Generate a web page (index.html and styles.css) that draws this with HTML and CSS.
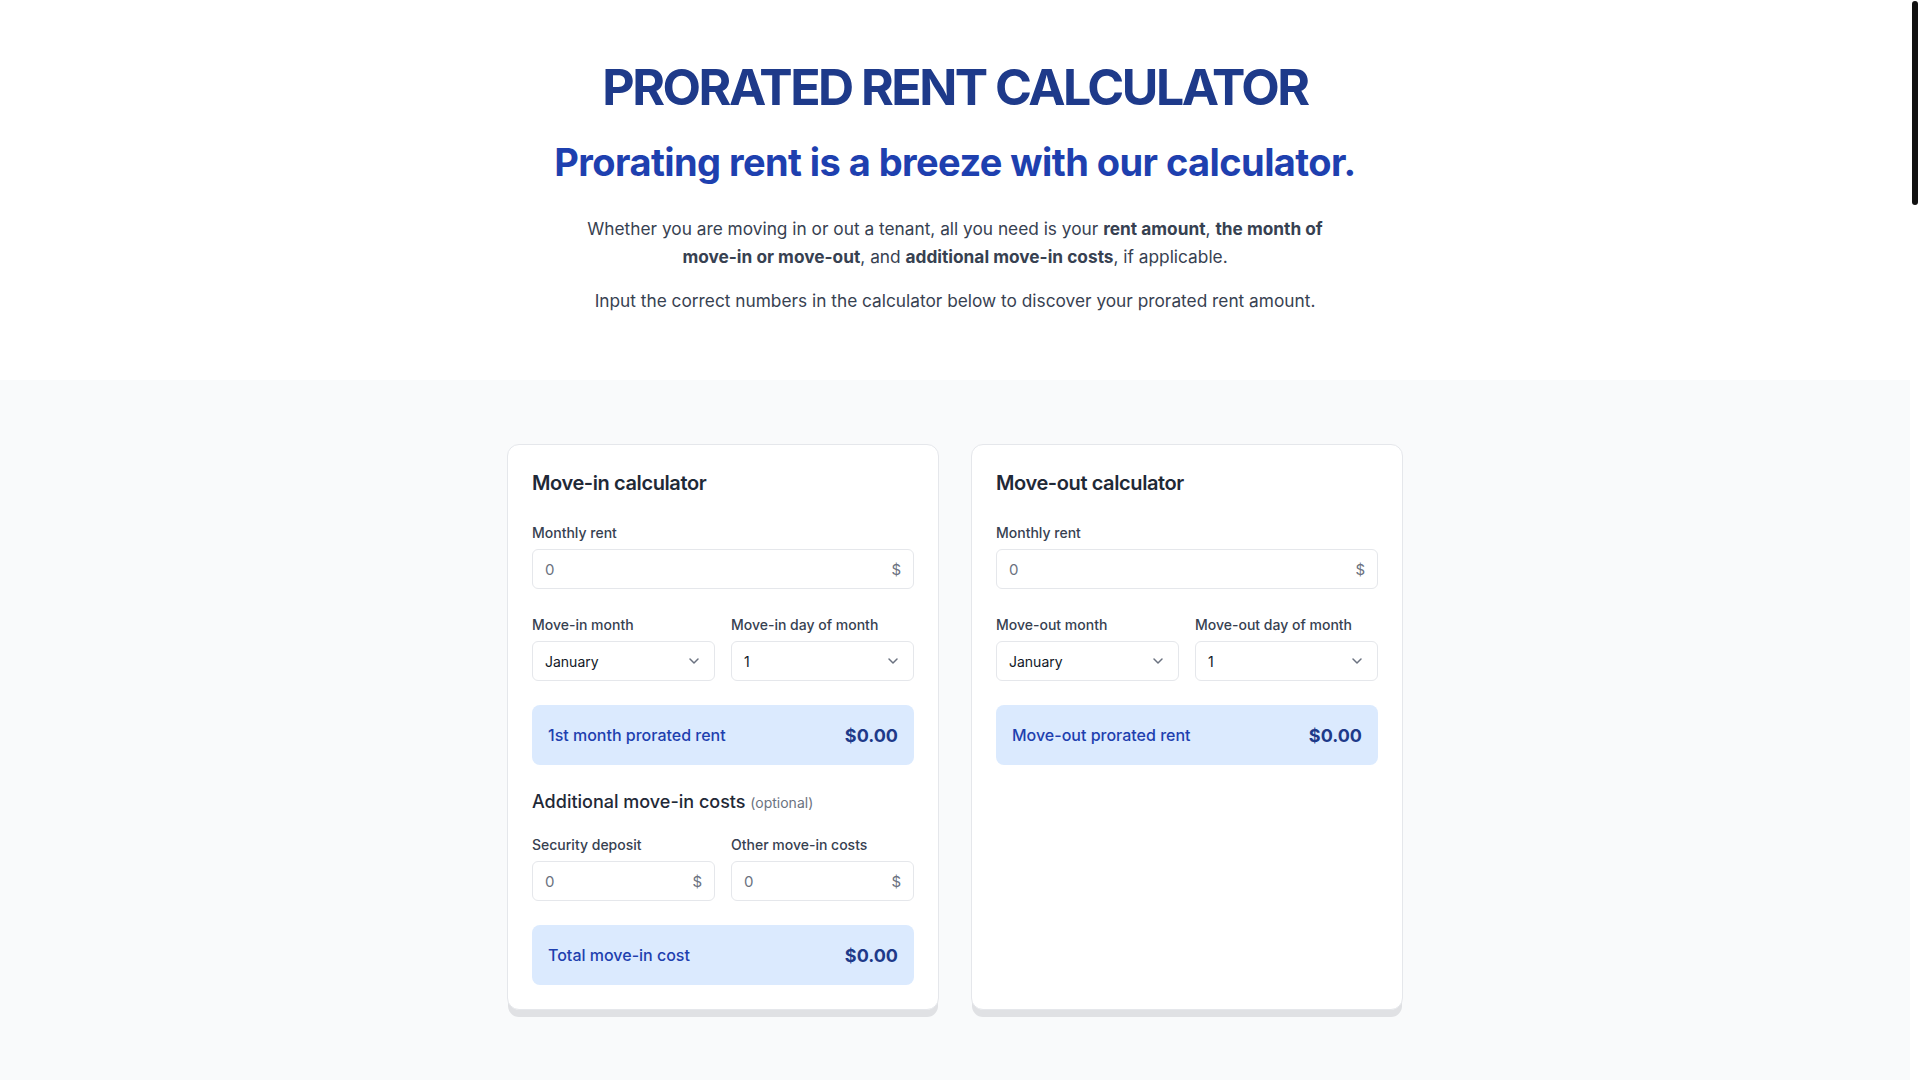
FILE: index.html
```html
<!DOCTYPE html>
<html lang="en">
<head>
<meta charset="utf-8">
<title>Prorated Rent Calculator</title>
<link rel="stylesheet" href="styles.css">
</head>
<body>
<div class="scroll-thumb" aria-hidden="true"></div>
<header class="hero">
  <h1 class="title">PRORATED RENT CALCULATOR</h1>
  <h2 class="subtitle">Prorating rent is a breeze with our calculator.</h2>
  <p class="lead">Whether you are moving in or out a tenant, all you need is your <strong>rent amount</strong>, <strong>the month of move-in or move-out</strong>, and <strong>additional move-in costs</strong>, if applicable.</p>
  <p class="lead">Input the correct numbers in the calculator below to discover your prorated rent amount.</p>
</header>

<section class="calc-section">
  <div class="calc-grid">
    <div class="card">
      <h3 class="card-title">Move-in calculator</h3>
      <div class="field">
        <label class="label">Monthly rent</label>
        <div class="input-box"><input class="input" type="text" placeholder="0"><span class="unit">$</span></div>
      </div>
      <div class="row">
        <div class="field">
          <label class="label">Move-in month</label>
          <div class="select-box">
            <select class="select"><option>January</option></select>
            <svg class="chev" viewBox="0 0 20 20" width="20" height="20"><path d="M6 8l4 4 4-4" fill="none" stroke="#6b7280" stroke-width="1.5" stroke-linecap="round" stroke-linejoin="round"/></svg>
          </div>
        </div>
        <div class="field">
          <label class="label">Move-in day of month</label>
          <div class="select-box">
            <select class="select"><option>1</option></select>
            <svg class="chev" viewBox="0 0 20 20" width="20" height="20"><path d="M6 8l4 4 4-4" fill="none" stroke="#6b7280" stroke-width="1.5" stroke-linecap="round" stroke-linejoin="round"/></svg>
          </div>
        </div>
      </div>
      <div class="result">
        <span class="result-label">1st month prorated rent</span>
        <span class="result-value">$0.00</span>
      </div>
      <h4 class="sub-title">Additional move-in costs <span class="optional">(optional)</span></h4>
      <div class="row row-tight">
        <div class="field">
          <label class="label">Security deposit</label>
          <div class="input-box"><input class="input" type="text" placeholder="0"><span class="unit">$</span></div>
        </div>
        <div class="field">
          <label class="label">Other move-in costs</label>
          <div class="input-box"><input class="input" type="text" placeholder="0"><span class="unit">$</span></div>
        </div>
      </div>
      <div class="result">
        <span class="result-label">Total move-in cost</span>
        <span class="result-value">$0.00</span>
      </div>
    </div>

    <div class="card">
      <h3 class="card-title">Move-out calculator</h3>
      <div class="field">
        <label class="label">Monthly rent</label>
        <div class="input-box"><input class="input" type="text" placeholder="0"><span class="unit">$</span></div>
      </div>
      <div class="row">
        <div class="field">
          <label class="label">Move-out month</label>
          <div class="select-box">
            <select class="select"><option>January</option></select>
            <svg class="chev" viewBox="0 0 20 20" width="20" height="20"><path d="M6 8l4 4 4-4" fill="none" stroke="#6b7280" stroke-width="1.5" stroke-linecap="round" stroke-linejoin="round"/></svg>
          </div>
        </div>
        <div class="field">
          <label class="label">Move-out day of month</label>
          <div class="select-box">
            <select class="select"><option>1</option></select>
            <svg class="chev" viewBox="0 0 20 20" width="20" height="20"><path d="M6 8l4 4 4-4" fill="none" stroke="#6b7280" stroke-width="1.5" stroke-linecap="round" stroke-linejoin="round"/></svg>
          </div>
        </div>
      </div>
      <div class="result">
        <span class="result-label">Move-out prorated rent</span>
        <span class="result-value">$0.00</span>
      </div>
    </div>
  </div>
</section>
</body>
</html>
```
FILE: styles.css
```css
html { background: #ffffff; }

body {
  margin: 0;
  padding-right: 10px;
  font-family: Inter, "Noto Sans", sans-serif;
  color: #1f2937;
  background: #ffffff;
}

.scroll-thumb {
  position: fixed;
  top: 1px;
  right: 2px;
  width: 6px;
  height: 204px;
  border-radius: 3px;
  background: #111111;
}

.hero {
  padding: 56px 24px 65px;
  text-align: center;
}
.title {
  margin: 0;
  font-size: 50px;
  line-height: 62px;
  font-weight: 700;
  letter-spacing: -0.05em;
  color: #1e3a8a;
}
.subtitle {
  margin: 22px 0 0;
  font-size: 38px;
  line-height: 44px;
  font-weight: 700;
  letter-spacing: -0.015em;
  color: #1e40af;
}
.lead {
  max-width: 760px;
  margin: 31px auto 0;
  font-size: 17.3px;
  line-height: 28px;
  color: #374151;
}
.lead + .lead { margin-top: 16px; }
.lead strong { font-weight: 700; color: #374151; }

.calc-section {
  background: #f9fafb;
  padding: 64px 24px 0;
  min-height: 700px;
  box-sizing: border-box;
}
.calc-grid {
  max-width: 896px;
  margin: 0 auto;
  display: grid;
  grid-template-columns: 1fr 1fr;
  gap: 32px;
  align-items: stretch;
}
.card {
  background: #ffffff;
  border: 1px solid #e5e7eb;
  border-radius: 12px;
  padding: 24px;
  box-shadow: 0 8px 0 -1px #e0e1e4;
  display: flex;
  flex-direction: column;
}
.card-title {
  margin: 0 0 26px;
  font-size: 20px;
  line-height: 28px;
  font-weight: 600;
  letter-spacing: -0.02em;
  color: #1f2937;
}
.field { display: flex; flex-direction: column; min-width: 0; }
.label {
  font-size: 14px;
  line-height: 20px;
  font-weight: 500;
  color: #374151;
  margin-bottom: 6px;
}
.input-box, .select-box {
  height: 40px;
  box-sizing: border-box;
  border: 1px solid #e5e7eb;
  border-radius: 6px;
  background: #ffffff;
  display: flex;
  align-items: center;
  padding: 0 12px;
}
.input {
  flex: 1;
  min-width: 0;
  border: 0;
  outline: none;
  padding: 0;
  background: transparent;
  font-family: inherit;
  font-size: 15px;
  color: #111827;
}
.input::placeholder { color: #6b7280; }
.unit { font-size: 15px; color: #6b7280; }
.select-box { padding: 0 10px 0 12px; }
.select {
  flex: 1;
  min-width: 0;
  appearance: none;
  -webkit-appearance: none;
  border: 0;
  outline: none;
  background: transparent;
  padding: 0;
  font-family: inherit;
  font-size: 14px;
  color: #111827;
}
.chev { flex: none; }

.row {
  display: grid;
  grid-template-columns: 1fr 1fr;
  gap: 16px;
  margin-top: 26px;
}
.row-tight { margin-top: 18px; }

.result {
  margin-top: 24px;
  height: 60px;
  box-sizing: border-box;
  padding: 0 16px;
  border-radius: 8px;
  background: #dbeafe;
  display: flex;
  align-items: center;
  justify-content: space-between;
}
.result-label { font-size: 16px; font-weight: 500; color: #1e40af; }
.result-value { font-size: 18px; font-weight: 700; color: #1e3a8a; }

.sub-title {
  margin: 23px 0 0;
  font-size: 18px;
  line-height: 28px;
  font-weight: 500;
  color: #1f2937;
}
.optional { font-size: 14px; font-weight: 400; color: #6b7280; }
```
